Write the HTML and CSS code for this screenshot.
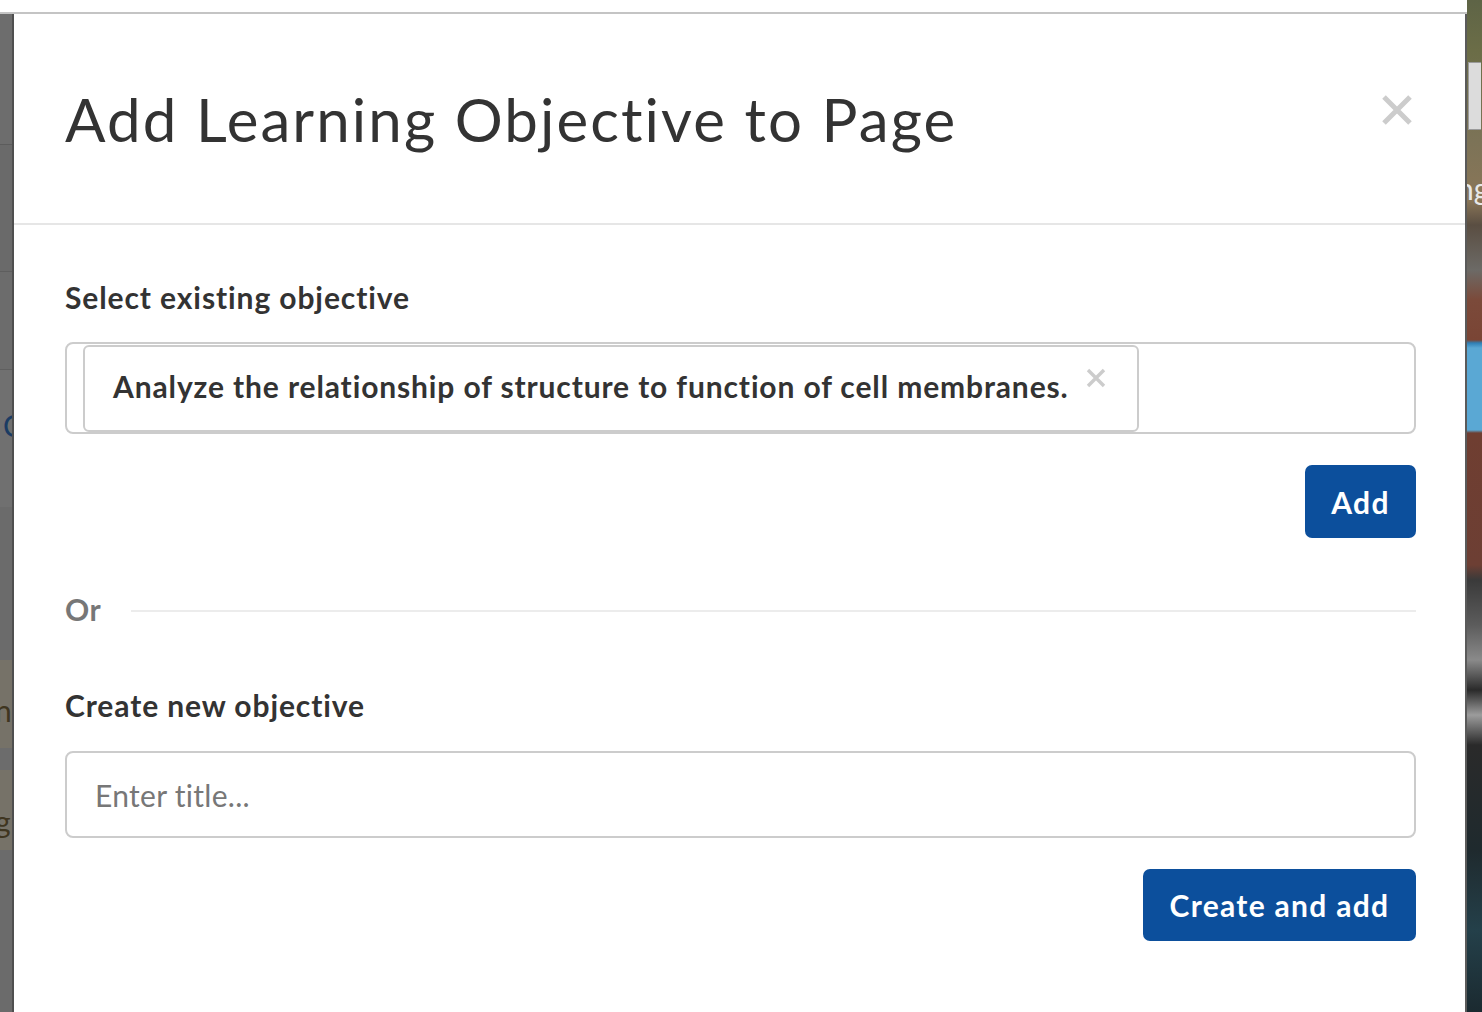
FILE: index.html
```html
<!DOCTYPE html>
<html lang="en">
<head>
    <meta charset="UTF-8">
    <meta name="viewport" content="width=device-width, initial-scale=1.0">
    <title>Add Learning Objective to Page</title>
    <link rel="stylesheet" href="styles.css">
</head>
<body>
    <div class="topbar"></div>

    <div class="stage">
        <div class="backdrop-left">
            <div class="bl-block bl-a"></div>
            <div class="bl-block bl-b"></div>
            <div class="bl-block bl-c"></div>
            <div class="bl-block bl-d"><span class="bl-text blue">C</span></div>
            <div class="bl-block bl-e"></div>
            <div class="bl-block bl-f tan"><span class="bl-text brown end">n</span></div>
            <div class="bl-block bl-g"></div>
            <div class="bl-block bl-h tan"><span class="bl-text brown end">g</span></div>
            <div class="bl-block bl-i"></div>
        </div>

        <div class="modal">
            <header class="modal-header">
                <h1>Add Learning Objective to Page</h1>
                <button class="close-btn" aria-label="Close">
                    <svg width="32" height="32" viewBox="0 0 32 32">
                        <path d="M3 3 L29 29 M29 3 L3 29" stroke="#cccccc" stroke-width="5" fill="none"/>
                    </svg>
                </button>
            </header>

            <div class="modal-body">
                <h2 class="section-label">Select existing objective</h2>
                <div class="select-box">
                    <div class="tag">
                        <span class="tag-text">Analyze the relationship of structure to function of cell membranes.</span>
                        <span class="tag-remove">
                            <svg width="20" height="20" viewBox="0 0 20 20">
                                <path d="M2 2 L18 18 M18 2 L2 18" stroke="#cccccc" stroke-width="3.4" fill="none"/>
                            </svg>
                        </span>
                    </div>
                </div>
                <div class="actions">
                    <button class="primary-btn add-btn">Add</button>
                </div>

                <div class="divider">
                    <span class="divider-text">Or</span>
                    <span class="divider-line"></span>
                </div>

                <h2 class="section-label create-label">Create new objective</h2>
                <input class="title-input" type="text" placeholder="Enter title...">
                <div class="actions">
                    <button class="primary-btn create-btn">Create and add</button>
                </div>
            </div>
        </div>

        <div class="backdrop-right">
            <div class="br-panel"></div>
            <span class="br-text">ng</span>
        </div>
    </div>
</body>
</html>
```

FILE: styles.css
```css
:root {
    --text-color: #333333;
    --muted-color: #777777;
    --border-color: #cccccc;
    --rule-color: #e6e6e6;
    --button-bg: #0c4f9c;
    --font-family: 'Lato', 'Liberation Sans', sans-serif;
}

html, body {
    margin: 0;
    height: 100%;
    overflow: hidden;
}

body {
    font-family: var(--font-family);
    background: #ffffff;
    color: var(--text-color);
}

.topbar {
    height: 12px;
    background: #ffffff;
    border-bottom: 2px solid #c4c4c4;
}

.stage {
    display: flex;
    height: calc(100% - 14px);
}

/* page behind the overlay, left side */
.backdrop-left {
    width: 12px;
    flex-shrink: 0;
    display: flex;
    flex-direction: column;
    background: #6b6b6b;
    overflow: hidden;
}

.bl-block {
    flex-shrink: 0;
    overflow: hidden;
    white-space: nowrap;
}

.bl-a { height: 130px; background: #6d6d6d; border-bottom: 1px solid #5c5c5c; }
.bl-b { height: 126px; background: #6a6a6a; border-bottom: 1px solid #5e5e5e; }
.bl-c { height: 97px; background: #6c6c6c; border-bottom: 1px solid #5f5f5f; }
.bl-d { height: 137px; background: #707070; }
.bl-e { height: 153px; background: #6b6b6b; }
.bl-f { height: 88px; }
.bl-g { height: 22px; background: #6c6c6c; }
.bl-h { height: 80px; }
.bl-i { height: 200px; background: #6b6b6b; }

.tan { background: #767268; }

.bl-text {
    display: block;
    font-size: 30px;
    line-height: 30px;
}

.bl-d .bl-text { margin: 40px 0 0 3px; }
.bl-f .bl-text { margin: 35px 0 0 -5px; }
.bl-h .bl-text { margin: 36px 0 0 -5px; }

.blue { color: #1b3c63; }
.brown { color: #3f3520; }

/* page behind the overlay, right side */
.backdrop-right {
    flex: 1;
    display: flex;
    flex-direction: column;
    overflow: hidden;
    margin-top: -14px;
    background: linear-gradient(180deg,
        #5e6446 0px, #6b6d47 50px, #7c7357 140px, #8a7658 200px,
        #5a4e42 225px, #6c6a66 270px, #7b4a3a 300px, #7a4535 340px,
        #2f7fb5 343px, #5aa8d4 348px, #5aa8d4 430px, #6f3e31 433px,
        #6d3f34 565px, #3a3a3a 580px, #5c5c5c 625px, #8a8a8a 660px,
        #2a2a2a 690px, #9c9c9c 715px, #2a2a2a 745px, #1f2a2e 850px,
        #24404a 930px, #1b2a30 1012px);
}

.br-panel {
    margin: 62px 0 0 1px;
    width: 12px;
    height: 66px;
    background: #dcdcdc;
    border: 1px solid #9a9a9a;
    border-right: none;
}

.br-text {
    margin: 40px 0 0 -10px;
    font-size: 30px;
    color: #e8e8e8;
    white-space: nowrap;
}

/* modal */
.modal {
    width: 1451px;
    flex-shrink: 0;
    background: #ffffff;
    border-left: 2px solid #4f4f4f;
    border-right: 2px solid #5a5a5a;
    display: flex;
    flex-direction: column;
}

.modal-header {
    height: 209px;
    display: flex;
    align-items: center;
    justify-content: space-between;
    padding: 0 52px 0 51px;
    border-bottom: 2px solid var(--rule-color);
}

.modal-header h1 {
    margin: 0;
    font-size: 60px;
    font-weight: 400;
    line-height: 1;
    color: var(--text-color);
    letter-spacing: 2.1px;
}

.close-btn {
    background: none;
    border: none;
    padding: 0;
    margin-top: -18px;
    cursor: pointer;
    display: flex;
}

.modal-body {
    padding: 0 49px 0 51px;
    display: flex;
    flex-direction: column;
}

.section-label {
    margin: 0;
    font-size: 30px;
    font-weight: 700;
    line-height: 34px;
    letter-spacing: 0.9px;
    color: var(--text-color);
}

.modal-body > .section-label:first-child {
    margin-top: 55px;
}

.select-box {
    margin-top: 28px;
    height: 87px;
    border: 2px solid var(--border-color);
    border-radius: 8px;
    padding: 1px 0 0 16px;
    display: flex;
    align-items: flex-start;
}

.tag {
    height: 78px;
    border: 2px solid var(--border-color);
    border-radius: 6px;
    display: flex;
    align-items: center;
    padding: 0 31px 5px 28px;
}

.tag-text {
    font-size: 30px;
    font-weight: 700;
    letter-spacing: 0.87px;
    color: var(--text-color);
}

.tag-remove {
    display: flex;
    margin: -16px 0 0 17px;
}

.actions {
    display: flex;
    justify-content: flex-end;
}

.primary-btn {
    font-family: var(--font-family);
    background: var(--button-bg);
    color: #ffffff;
    border: none;
    border-radius: 7px;
    font-size: 30px;
    font-weight: 700;
    letter-spacing: 1.3px;
    cursor: pointer;
}

.add-btn {
    margin-top: 31px;
    width: 111px;
    height: 73px;
}

.divider {
    margin-top: 54px;
    display: flex;
    align-items: center;
    gap: 30px;
}

.divider-text {
    font-size: 30px;
    font-weight: 700;
    letter-spacing: 0.5px;
    color: var(--muted-color);
    line-height: 34px;
}

.divider-line {
    flex: 1;
    height: 2px;
    background: #ececec;
    margin-top: 4px;
}

.create-label {
    margin-top: 62px;
}

.title-input {
    margin-top: 29px;
    height: 87px;
    box-sizing: border-box;
    border: 2px solid var(--border-color);
    border-radius: 8px;
    padding: 0 28px;
    font-family: var(--font-family);
    font-size: 30px;
    letter-spacing: 0.3px;
    color: var(--text-color);
    outline: none;
}

.title-input::placeholder {
    color: var(--muted-color);
}

.create-btn {
    margin-top: 31px;
    width: 273px;
    height: 72px;
}
```
